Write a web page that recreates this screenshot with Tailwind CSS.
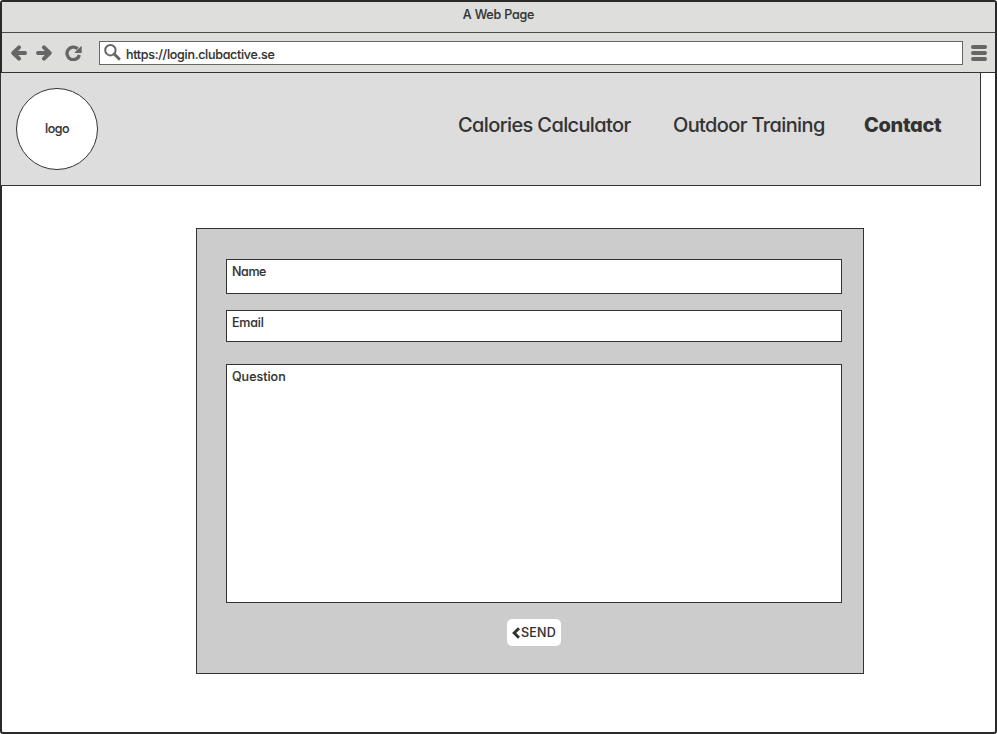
<!DOCTYPE html>
<html lang="en">
<head>
<meta charset="utf-8">
<title>A Web Page</title>
<script src="https://cdn.jsdelivr.net/npm/@tailwindcss/browser@4"></script>
</head>
<body class="bg-white">
<div class="flex h-[734px] w-[997px] flex-col rounded-[3px] border-2 border-[#2b2a2b] bg-white font-['Inter','Liberation_Sans',sans-serif] text-[12.5px] leading-4 font-medium tracking-[-0.2px] text-[#333] [-webkit-text-stroke:0.12px_#333] [font-feature-settings:'cv11','ss03']">
  <div class="flex h-[31px] shrink-0 justify-center border-b border-[#4a4a4a] bg-[#dededc] pt-[5px]"><span class="whitespace-nowrap">A Web Page</span></div>
  <div class="flex h-10 shrink-0 items-center border-b border-[#333] bg-[#dededc] pl-[9px]">
    <svg class="mr-[9px] h-4 w-4" viewBox="0 0 16 16" fill="none" stroke="#666" stroke-width="4" stroke-linejoin="round" stroke-linecap="round"><path d="M3 8H14"/><path d="M8 2.3L2.3 8L8 13.7"/></svg>
    <svg class="mr-[13px] h-4 w-4" viewBox="0 0 16 16" fill="none" stroke="#666" stroke-width="4" stroke-linejoin="round" stroke-linecap="round"><path d="M2 8H13"/><path d="M8 2.3L13.7 8L8 13.7"/></svg>
    <svg class="mr-[17px] h-4 w-[17px]" viewBox="0 0 17 16"><path d="M12.6 3.8A6.3 6.3 0 1 0 14.4 10" fill="none" stroke="#666" stroke-width="3.3"/><path d="M16.7 .8V8H9.3L11.5 5.5L14.3 3Z" fill="#666"/></svg>
    <div class="flex h-6 w-[864px] items-center border border-[#666] bg-white pl-1">
      <svg class="h-[17px] w-[17px]" viewBox="0 0 17 17" fill="none" stroke="#666"><circle cx="6.4" cy="6.2" r="5.2" stroke-width="2"/><path d="M10.2 10L15 14.8" stroke-width="3" stroke-linecap="round"/></svg>
      <span class="ml-[5px] whitespace-nowrap pt-[4px] tracking-[-0.28px]">https://login.clubactive.se</span>
    </div>
    <div class="ml-2 flex w-4 flex-col gap-[2px]"><i class="h-1 rounded-full bg-[#666]"></i><i class="h-1 rounded-full bg-[#666]"></i><i class="h-1 rounded-full bg-[#666]"></i></div>
  </div>
  <header class="-ml-[2px] flex h-[113px] w-[981px] shrink-0 border-r border-b border-l border-[#333] bg-[#ddd]">
    <div class="mt-[15px] ml-[15px] flex h-[82px] w-[82px] items-center justify-center rounded-full border border-[#333] bg-white tracking-[-0.5px]">logo</div>
    <nav class="ml-[360px] flex pt-[38px] text-[20px] leading-[29px] tracking-[-0.63px] whitespace-nowrap [-webkit-text-stroke:0px]">
      <a class="w-[215px]">Calories Calculator</a>
      <a class="w-[191px]">Outdoor Training</a>
      <a class="font-extrabold tracking-[-0.35px]">Contact</a>
    </nav>
  </header>
  <main class="mt-[42px] ml-[194px] flex h-[446px] w-[668px] shrink-0 flex-col border border-[#333] bg-[#ccc] pt-[30px] pl-[29px]">
    <div class="h-[35px] w-[616px] border border-[#333] bg-white pt-1 pl-[5px] tracking-[-0.4px]">Name</div>
    <div class="mt-4 h-8 w-[616px] border border-[#333] bg-white pt-1 pl-[5px] tracking-[-0.2px]">Email</div>
    <div class="mt-[22px] h-[239px] w-[616px] border border-[#333] bg-white pt-1 pl-[5px] tracking-[0px]">Question</div>
    <button class="mt-4 ml-[281px] flex h-[27px] w-[54px] items-center rounded-[5px] bg-white pl-[5px] tracking-[0.2px]">
      <svg class="mr-px h-3 w-2 shrink-0" viewBox="0 0 8 12" fill="none" stroke="#333" stroke-width="3"><path d="M7 1.2L2.2 6L7 10.8"/></svg><span>SEND</span>
    </button>
  </main>
</div>
</body>
</html>
